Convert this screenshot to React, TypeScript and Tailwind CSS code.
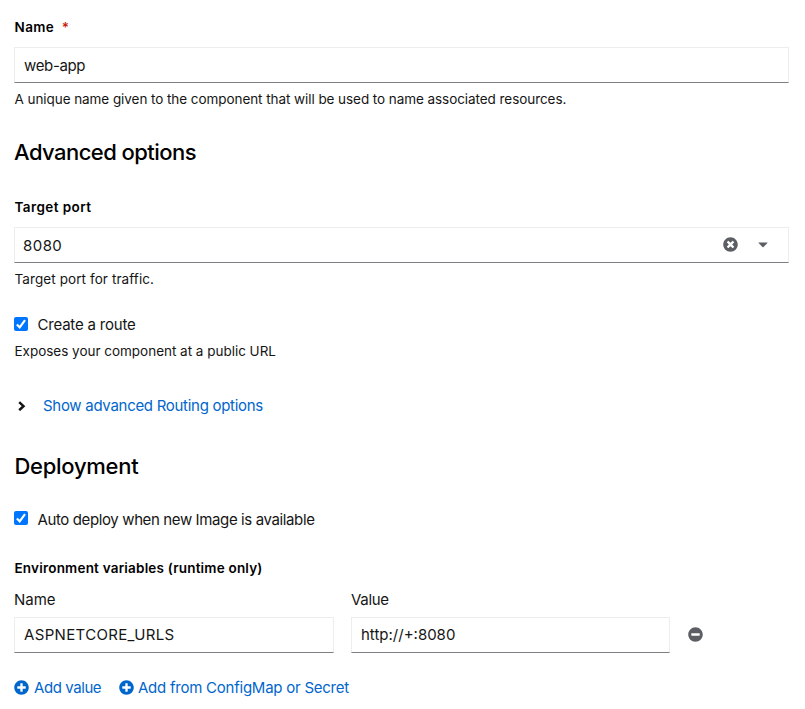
import React from "react";

type IconProps = { className?: string };

function PlusCircle({ className }: IconProps) {
  return (
    <svg viewBox="0 0 512 512" fill="currentColor" className={className} aria-hidden="true">
      <path d="M256 8C119 8 8 119 8 256s111 248 248 248 248-111 248-248S393 8 256 8zm144 276c0 6.600-5.400 12-12 12h-92v92c0 6.600-5.400 12-12 12h-56c-6.600 0-12-5.400-12-12v-92h-92c-6.600 0-12-5.400-12-12v-56c0-6.600 5.400-12 12-12h92v-92c0-6.600 5.400-12 12-12h56c6.600 0 12 5.400 12 12v92h92c6.600 0 12 5.400 12 12v56z" />
    </svg>
  );
}

function MinusCircle({ className }: IconProps) {
  return (
    <svg viewBox="0 0 512 512" fill="currentColor" className={className} aria-hidden="true">
      <path d="M256 8C119 8 8 119 8 256s111 248 248 248 248-111 248-248S393 8 256 8zM124 296c-6.600 0-12-5.400-12-12v-56c0-6.600 5.400-12 12-12h264c6.600 0 12 5.400 12 12v56c0 6.600-5.400 12-12 12H124z" />
    </svg>
  );
}

function TimesCircle({ className }: IconProps) {
  return (
    <svg viewBox="0 0 512 512" fill="currentColor" className={className} aria-hidden="true">
      <path d="M256 8C119 8 8 119 8 256s111 248 248 248 248-111 248-248S393 8 256 8zm121.600 313.100c4.700 4.700 4.700 12.300 0 17L338 377.600c-4.700 4.700-12.300 4.700-17 0L256 312l-65.100 65.600c-4.700 4.700-12.300 4.700-17 0L134.400 338c-4.700-4.700-4.700-12.300 0-17l65.600-65-65.600-65.100c-4.700-4.700-4.700-12.300 0-17l39.600-39.600c4.700-4.700 12.300-4.700 17 0l65 65.700 65.100-65.600c4.700-4.700 12.300-4.700 17 0l39.600 39.600c4.700 4.700 4.700 12.300 0 17L312 256l65.600 65.100z" />
    </svg>
  );
}

function Checkbox({ className = "" }: IconProps) {
  return (
    <span role="checkbox" aria-checked="true" className={`flex size-3.5 shrink-0 items-center justify-center rounded-[2px] bg-[#0075ff] text-white ${className}`}>
      <svg viewBox="0 0 14 14" fill="none" stroke="currentColor" strokeWidth="2.200" className="size-3.5">
        <path d="M2.900 7.500 5.700 10.300 11 3.200" />
      </svg>
    </span>
  );
}

const field = "flex h-9 items-center border border-[#ededed] border-b-[#7d7f82] bg-white text-[15px]";
const label = "h-5 pl-[0.5px] text-[13.5px] font-semibold text-black";
const helper = "h-5 pl-[0.5px] text-[13.5px]";
const heading = "h-8 text-[22px] leading-8 font-medium text-black";

export default function App() {
  return (
    <main className="h-[709px] w-[805px] overflow-hidden bg-white pt-[17px] pr-4 pl-3.5 font-['Inter',sans-serif] text-[15px] leading-5 whitespace-nowrap text-[#151515]">
      <div className={`${label} flex`}>
        <span className="tracking-[0.4px]">Name</span>
        <span className="ml-[7.5px] text-[#c9190b]">*</span>
      </div>
      <div className={`${field} mt-2.5 pt-0.5 pl-[9px]`}>
        <span className="tracking-[-0.35px]">web-app</span>
      </div>
      <p className={`${helper} mt-1.5 tracking-[-0.065px]`}>A unique name given to the component that will be used to name associated resources.</p>

      <h2 className={`${heading} mt-[27px] tracking-[-0.55px]`}>Advanced options</h2>
      <div className={`${label} mt-[29px] tracking-[0.42px]`}>Target port</div>
      <div className={`${field} mt-2.5 justify-between pl-2`}>
        <span className="pt-0.5 tracking-[0.45px]">8080</span>
        <span className="flex items-center pb-px text-[#5b5e63]">
          <TimesCircle className="size-[15px]" />
          <svg viewBox="0 0 10 6" fill="currentColor" className="mr-5 ml-5 h-1.5 w-2.5" aria-hidden="true">
            <path d="M.9.5h8.200q.7 0 .3.600L5.500 5.100q-.5.500-1 0L.600 1.100Q.2.500.9.500Z" />
          </svg>
        </span>
      </div>
      <p className={`${helper} mt-1.5 tracking-[0.09px]`}>Target port for traffic.</p>

      <div className="mt-[25px] flex h-5 items-center gap-[9.5px]">
        <Checkbox />
        <span className="pt-0.5 tracking-[-0.2px]">Create a route</span>
      </div>
      <p className={`${helper} mt-[7px] tracking-[-0.02px]`}>Exposes your component at a public URL</p>

      <div className="mt-[35px] flex h-5 items-center text-[#0066cc]">
        <svg viewBox="0 0 10 10" fill="none" stroke="#151515" strokeWidth="2.500" className="mb-px ml-[3px] size-2.5" aria-hidden="true">
          <path d="M2.200 1.200 6.500 5.200 2.200 9.200" />
        </svg>
        <span className="ml-4 tracking-[-0.29px]">Show advanced Routing options</span>
      </div>

      <h2 className={`${heading} mt-[34px] pl-[0.5px] tracking-[-0.28px]`}>Deployment</h2>
      <div className="mt-[27px] flex h-5 items-center gap-[9.5px]">
        <Checkbox className="mb-0.5" />
        <span className="pt-0.5 tracking-[-0.38px]">Auto deploy when new Image is available</span>
      </div>

      <div className={`${label} mt-[29px] tracking-[0.2px]`}>Environment variables (runtime only)</div>
      <div className="mt-3 grid grid-cols-[320px_319px_auto] gap-x-[17px] gap-y-[7px]">
        <span className="h-5">Name</span>
        <span className="h-5 tracking-[-0.3px]">Value</span>
        <span />
        <div className={`${field} pl-[9px]`}>
          <span className="tracking-[0.34px]">ASPNETCORE_URLS</span>
        </div>
        <div className={`${field} pl-[9px]`}>
          <span>http://+:8080</span>
        </div>
        <div className="flex items-center pb-0.5 text-[#5b5e63]">
          <MinusCircle className="ml-px size-[15px]" />
        </div>
      </div>

      <div className="mt-[25px] flex h-5 items-center text-[#0066cc]">
        <PlusCircle className="mb-px size-[15px]" />
        <span className="ml-[5px] w-[85px] tracking-[-0.42px]">Add value</span>
        <PlusCircle className="mb-px size-[15px]" />
        <span className="ml-1 tracking-[-0.24px]">Add from ConfigMap or Secret</span>
      </div>
    </main>
  );
}
